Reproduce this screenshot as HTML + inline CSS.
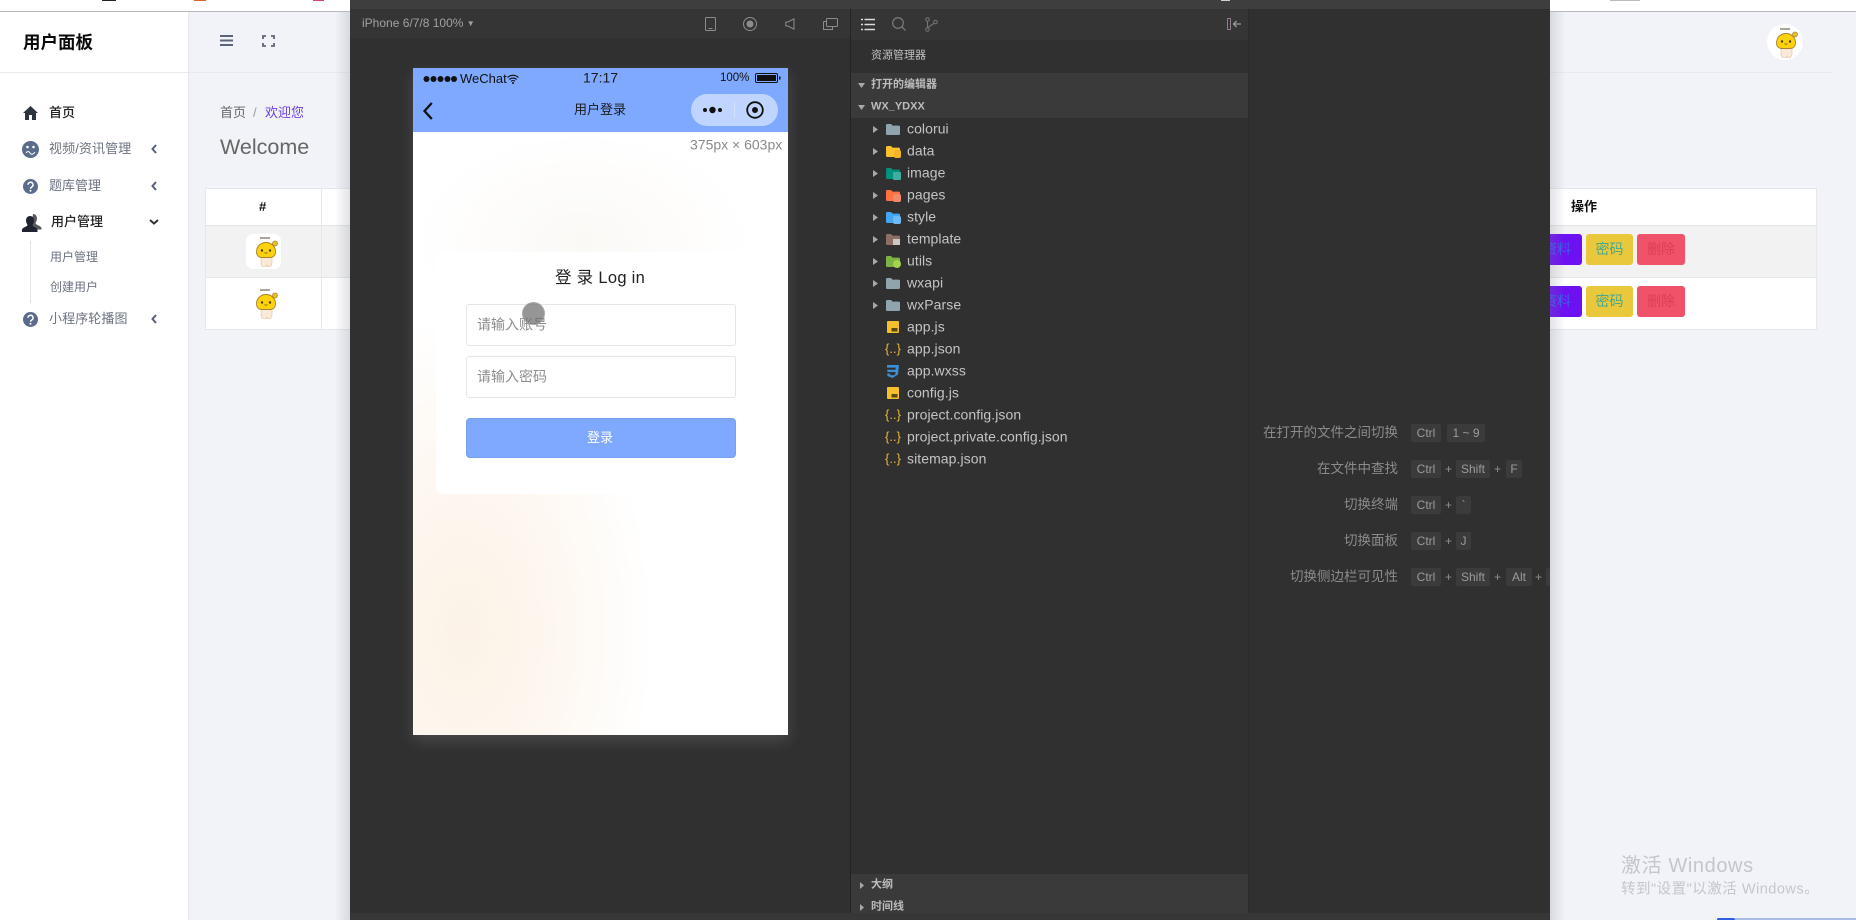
<!DOCTYPE html>
<html lang="zh"><head><meta charset="utf-8"><title>用户面板</title>
<style>
*{box-sizing:border-box;margin:0;padding:0}
html,body{width:1856px;height:920px;overflow:hidden;background:#f1f3f8;font-family:"Liberation Sans","Noto Sans CJK SC",sans-serif}
.a{position:absolute}
.t{position:absolute;white-space:nowrap;transform:translateY(-50%);line-height:1.2}
svg{position:absolute;overflow:visible;display:block}
.side{color:#6b7280;font-size:14px}
.tree{color:#c4c4c4;font-size:14px;left:907px;letter-spacing:.07px}
.lab{color:#8b8b8b;font-size:13.5px;right:458px}
.k{position:absolute;height:18px;line-height:18px;text-align:center;background:#3b3b3b;color:#9b9b9b;font-size:12px;border-radius:2px}
.p{position:absolute;color:#8e8e8e;font-size:12px;line-height:18px}
.btn{position:absolute;height:31px;border-radius:3px;font-size:14px;line-height:31px;text-align:center}
.j{position:absolute;white-space:nowrap;transform:translateY(-50%);left:885px;font-size:13px;line-height:1.2;color:#e8b53e}
</style></head><body>
<svg width="0" height="0" style="position:absolute">
<defs>
<symbol id="m" viewBox="0 0 22 30">
<rect x="4" y="0" width="10" height="2" fill="#8d8577" opacity=".75"/>
<path d="M5 19h11v7c0 2-2 4-3 4h-1l-1-2-1 2H8c-2 0-3-2-3-4z" fill="#fbe9d7" stroke="#d9bea2" stroke-width=".6"/>
<path d="M.5 15C.5 9 5 5.500 10 5.500s9.500 3.500 9.500 9.500c0 3-2 5.500-5 5.500H5.500c-3 0-5-2.500-5-5.500z" fill="#fdd20c" stroke="#a8822a" stroke-width=".9"/>
<circle cx="19" cy="6.500" r="2.500" fill="#e9bc2b" stroke="#a8822a" stroke-width=".7"/>
<circle cx="6" cy="13.500" r="1.200" fill="#4a3a20"/><circle cx="14" cy="13.500" r="1.200" fill="#4a3a20"/>
<path d="M8.500 15.500q1.500 1.500 3 0" fill="none" stroke="#6a4a20" stroke-width=".7"/>
</symbol>
<symbol id="fd" viewBox="0 0 14 11"><path d="M0 1.200C0 .5.5 0 1.200 0H5l1.500 1.600h6.300c.7 0 1.200.5 1.200 1.200v7c0 .7-.5 1.200-1.200 1.200H1.200C.5 11 0 10.500 0 9.800z" fill="currentColor"/></symbol>
<symbol id="js" viewBox="0 0 12 12"><rect width="12" height="12" rx="1" fill="#f5c02e"/><rect x="4.500" y="7" width="6" height="3.500" fill="#5a4a14"/></symbol>
</defs>
</svg>

<!-- browser top strip -->
<div class="a" style="left:0;top:0;width:1856px;height:11px;background:#fff"></div>
<div class="a" style="left:0;top:11px;width:1856px;height:1px;background:#b9b9bd"></div>
<div class="a" style="left:102px;top:0;width:14px;height:1px;background:#222"></div>
<div class="a" style="left:194px;top:0;width:12px;height:1px;background:#e0632f"></div>
<div class="a" style="left:313px;top:0;width:11px;height:1px;background:#d6476a"></div>
<div class="a" style="left:1610px;top:0;width:30px;height:1px;background:#bbb"></div>

<!-- left sidebar -->
<div class="a" style="left:0;top:12px;width:189px;height:908px;background:#fff;border-right:1px solid #e6e8ee"></div>
<div class="a" style="left:0;top:72px;width:1832px;height:1px;background:#e8eaef"></div>
<div class="t" style="left:23px;top:43px;font-size:17.500px;font-weight:700;color:#0a0a0a">用户面板</div>

<svg style="left:23px;top:106px" width="15" height="14" viewBox="0 0 15 14"><path d="M7.500 0 15 7h-2v7H9V9H6v5H2V7H0z" fill="#2c3440"/></svg>
<div class="t" style="left:49px;top:113px;font-size:13px;color:#222;font-weight:500">首页</div>

<svg style="left:22px;top:141px" width="17" height="17" viewBox="0 0 17 17"><circle cx="8.500" cy="8.500" r="8.500" fill="#5b6b8c"/><circle cx="5.500" cy="6" r="1.300" fill="#fff"/><circle cx="11.500" cy="6" r="1.300" fill="#fff"/><path d="M4 12q2-3 4 0t5-1" fill="none" stroke="#fff"/></svg>
<div class="t side" style="left:49px;top:149px;font-size:13px;letter-spacing:.1px">视频/资讯管理</div>

<svg style="left:23px;top:179px" width="15" height="15" viewBox="0 0 15 15"><circle cx="7.500" cy="7.500" r="7.500" fill="#5b6b8c"/><path d="M5 5.800a2.500 2.500 0 1 1 3.700 2.200c-.8.5-1.200.8-1.200 1.700" fill="none" stroke="#fff" stroke-width="1.500"/><circle cx="7.500" cy="11.800" r="1" fill="#fff"/></svg>
<div class="t side" style="left:49px;top:186px;font-size:13px">题库管理</div>

<svg style="left:22px;top:214px" width="20" height="18" viewBox="0 0 20 18"><path d="M11 0c2.500 0 4 2 4 4.500 0 2-1 3.500-1.500 4.500 0 1 1 1.500 3 2.500 1.500.7 3 1.500 3 3v1H9z" fill="#5a5a5a"/><path d="M8 2c2.700 0 4 2 4 4.500 0 2-.8 3.500-1.500 4.500 0 1 1 1.500 3 2.500 1 .5 2 1.500 2 2.500V18H0v-2c0-1.500 1.500-2.300 3-3 2-1 2.500-1.500 2.500-2C5 10 4 8.500 4 6.500 4 4 5.500 2 8 2z" fill="#1f2430"/></svg>
<div class="t" style="left:51px;top:222px;font-size:13px;color:#222;font-weight:500">用户管理</div>
<div class="a" style="left:30px;top:241px;width:1px;height:62px;background:#e2e4e9"></div>
<div class="t side" style="left:50px;top:257px;font-size:12px">用户管理</div>
<div class="t side" style="left:50px;top:287px;font-size:12px">创建用户</div>

<svg style="left:23px;top:312px" width="15" height="15" viewBox="0 0 15 15"><circle cx="7.500" cy="7.500" r="7.500" fill="#5b6b8c"/><path d="M5 5.800a2.500 2.500 0 1 1 3.700 2.200c-.8.5-1.200.8-1.200 1.700" fill="none" stroke="#fff" stroke-width="1.500"/><circle cx="7.500" cy="11.800" r="1" fill="#fff"/></svg>
<div class="t side" style="left:49px;top:319px;font-size:13px;letter-spacing:.1px">小程序轮播图</div>

<svg style="left:151px;top:144px" width="6" height="10" viewBox="0 0 6 10"><path d="M5 1 1.500 5 5 9" fill="none" stroke="#56627a" stroke-width="2"/></svg>
<svg style="left:151px;top:181px" width="6" height="10" viewBox="0 0 6 10"><path d="M5 1 1.500 5 5 9" fill="none" stroke="#56627a" stroke-width="2"/></svg>
<svg style="left:151px;top:314px" width="6" height="10" viewBox="0 0 6 10"><path d="M5 1 1.500 5 5 9" fill="none" stroke="#56627a" stroke-width="2"/></svg>
<svg style="left:149px;top:219px" width="10" height="6" viewBox="0 0 10 6"><path d="M1 1l4 3.500L9 1" fill="none" stroke="#333" stroke-width="2"/></svg>

<!-- main header -->
<svg style="left:220px;top:35px" width="13" height="11" viewBox="0 0 13 11"><path d="M0 1h13M0 5.500h13M0 10h13" stroke="#5b6478" stroke-width="2"/></svg>
<svg style="left:262px;top:35px" width="13" height="12" viewBox="0 0 13 12"><path d="M1 4V1h3M9 1h3v3M12 8v3H9M4 11H1V8" fill="none" stroke="#5b6478" stroke-width="1.800"/></svg>
<div class="a" style="left:1767px;top:24px;width:36px;height:36px;border-radius:50%;background:#fff"></div>
<svg style="left:1776px;top:28px" width="22" height="30"><use href="#m"/></svg>

<div class="t" style="left:220px;top:113px;font-size:13px;color:#666">首页</div>
<div class="t" style="left:253px;top:113px;font-size:13px;color:#999">/</div>
<div class="t" style="left:265px;top:113px;font-size:13px;color:#6a3ee6">欢迎您</div>
<div class="t" style="left:220px;top:148px;font-size:21.500px;color:#666">Welcome</div>

<!-- table -->
<div class="a" style="left:205px;top:188px;width:1612px;height:142px;background:#fff;border:1px solid #e5e7ec"></div>
<div class="a" style="left:206px;top:225px;width:1610px;height:53px;background:#f2f2f2;border-top:1px solid #e3e5e9;border-bottom:1px solid #e3e5e9"></div>
<div class="a" style="left:321px;top:189px;width:1px;height:140px;background:#e5e7ec"></div>
<div class="t" style="left:259px;top:207px;font-size:13px;font-weight:700;color:#111">#</div>
<div class="a" style="left:246px;top:234px;width:35px;height:35px;border-radius:7px;background:#fff"></div>
<svg style="left:256px;top:237px" width="22" height="30"><use href="#m"/></svg>
<svg style="left:256px;top:289px" width="22" height="30"><use href="#m"/></svg>
<div class="t" style="left:1571px;top:207px;font-size:13px;font-weight:700;color:#111">操作</div>

<div class="btn" style="left:1530px;top:234px;width:52px;background:#6d10f2;color:#3f5ce6;text-align:right;padding-right:11px">资料</div>
<div class="btn" style="left:1586px;top:234px;width:47px;background:#e9c83c;color:#4aa88a">密码</div>
<div class="btn" style="left:1637px;top:234px;width:48px;background:#ef5269;color:#d9405a">删除</div>
<div class="btn" style="left:1530px;top:286px;width:52px;background:#6d10f2;color:#3f5ce6;text-align:right;padding-right:11px">资料</div>
<div class="btn" style="left:1586px;top:286px;width:47px;background:#e9c83c;color:#4aa88a">密码</div>
<div class="btn" style="left:1637px;top:286px;width:48px;background:#ef5269;color:#d9405a">删除</div>

<!-- dark devtools window -->
<div class="a" style="left:335px;top:12px;width:15px;height:908px;background:linear-gradient(90deg,rgba(120,125,140,0),rgba(120,125,140,.22))"></div>
<div class="a" style="left:1550px;top:12px;width:15px;height:908px;background:linear-gradient(270deg,rgba(120,125,140,0),rgba(120,125,140,.22))"></div>
<div class="a" style="left:350px;top:0;width:1200px;height:920px;background:#303030"></div>
<div class="a" style="left:350px;top:0;width:1200px;height:9px;background:#3e3e3e"></div>
<div class="a" style="left:1221px;top:0;width:9px;height:1px;background:#cfcfcf"></div>
<div class="a" style="left:350px;top:9px;width:500px;height:29px;background:#353535"></div>
<div class="a" style="left:851px;top:9px;width:397px;height:31px;background:#353535"></div>
<div class="a" style="left:850px;top:9px;width:1px;height:911px;background:#242424"></div>
<div class="a" style="left:1248px;top:9px;width:1px;height:911px;background:#2c2c2c"></div>
<div class="a" style="left:350px;top:913px;width:1200px;height:7px;background:#373737"></div>

<div class="t" style="left:362px;top:23px;font-size:12px;color:#a2a2a2">iPhone 6/7/8 100% <span style="font-size:8px;vertical-align:1px">▼</span></div>
<svg style="left:705px;top:17px" width="11" height="14" viewBox="0 0 11 14"><rect x=".5" y=".5" width="10" height="13" rx="1" fill="none" stroke="#8c8c8c"/><path d="M3.500 11.500h4" stroke="#8c8c8c"/></svg>
<svg style="left:743px;top:17px" width="14" height="14" viewBox="0 0 14 14"><circle cx="7" cy="7" r="6.500" fill="none" stroke="#8c8c8c"/><circle cx="7" cy="7" r="3.500" fill="#8c8c8c"/></svg>
<svg style="left:785px;top:18px" width="10" height="12" viewBox="0 0 10 12"><path d="M9 .8v10.400L3 8H.8V4H3z" fill="none" stroke="#8c8c8c"/></svg>
<svg style="left:823px;top:18px" width="15" height="12" viewBox="0 0 15 12"><rect x="3.500" y=".5" width="11" height="8" rx="1" fill="none" stroke="#8c8c8c"/><path d="M3.500 3.500H1a.5.500 0 0 0-.5.500v7.500h9V8.500" fill="none" stroke="#8c8c8c"/></svg>

<svg style="left:861px;top:18px" width="14" height="13" viewBox="0 0 14 13"><path d="M3.500 1.500H14M3.500 6.500H14M3.500 11.500H14M0 1.500h2M0 6.500h2M0 11.500h2" stroke="#dcdcdc" stroke-width="1.400"/></svg>
<svg style="left:892px;top:17px" width="14" height="14" viewBox="0 0 14 14"><circle cx="6" cy="6" r="5.300" fill="none" stroke="#777" stroke-width="1.300"/><path d="M10 10l3.500 3.500" stroke="#777" stroke-width="1.300"/></svg>
<svg style="left:925px;top:17px" width="13" height="15" viewBox="0 0 13 15"><circle cx="2.500" cy="2.500" r="1.800" fill="none" stroke="#777"/><circle cx="2.500" cy="12.500" r="1.800" fill="none" stroke="#777"/><circle cx="10.500" cy="5" r="1.800" fill="none" stroke="#777"/><path d="M2.500 4.500v6M9 6.500Q6 8 3 10.500" fill="none" stroke="#777"/></svg>
<svg style="left:1227px;top:18px" width="14" height="12" viewBox="0 0 14 12"><rect x=".5" y=".5" width="3" height="11" fill="none" stroke="#8a7a8a"/><path d="M14 6H7M9.500 3 6.500 6l3 3" fill="none" stroke="#999" stroke-width="1.300"/></svg>

<div class="t" style="left:871px;top:56px;font-size:11px;color:#c2c2c2">资源管理器</div>
<div class="a" style="left:851px;top:73px;width:397px;height:45px;background:#3a3a3a"></div>
<div class="t" style="left:871px;top:85px;font-size:11px;font-weight:700;color:#bcbcbc">打开的编辑器</div>
<div class="t" style="left:871px;top:107px;font-size:11px;font-weight:700;color:#bcbcbc">WX_YDXX</div>
<svg style="left:858px;top:83px" width="7" height="5"><path d="M0 0h7L3.500 5z" fill="#a8a8a8"/></svg>
<svg style="left:858px;top:105px" width="7" height="5"><path d="M0 0h7L3.500 5z" fill="#a8a8a8"/></svg>

<!-- tree -->
<svg style="left:873px;top:126px" width="5" height="7"><path d="M0 0l5 3.500L0 7z" fill="#a8a8a8"/></svg>
<svg style="left:873px;top:148px" width="5" height="7"><path d="M0 0l5 3.500L0 7z" fill="#a8a8a8"/></svg>
<svg style="left:873px;top:170px" width="5" height="7"><path d="M0 0l5 3.500L0 7z" fill="#a8a8a8"/></svg>
<svg style="left:873px;top:192px" width="5" height="7"><path d="M0 0l5 3.500L0 7z" fill="#a8a8a8"/></svg>
<svg style="left:873px;top:214px" width="5" height="7"><path d="M0 0l5 3.500L0 7z" fill="#a8a8a8"/></svg>
<svg style="left:873px;top:236px" width="5" height="7"><path d="M0 0l5 3.500L0 7z" fill="#a8a8a8"/></svg>
<svg style="left:873px;top:258px" width="5" height="7"><path d="M0 0l5 3.500L0 7z" fill="#a8a8a8"/></svg>
<svg style="left:873px;top:280px" width="5" height="7"><path d="M0 0l5 3.500L0 7z" fill="#a8a8a8"/></svg>
<svg style="left:873px;top:302px" width="5" height="7"><path d="M0 0l5 3.500L0 7z" fill="#a8a8a8"/></svg>

<svg style="left:886px;top:124px;color:#90a4ae" width="14" height="11"><use href="#fd"/></svg>
<svg style="left:886px;top:146px;color:#fbc02d" width="14" height="11"><use href="#fd"/><rect x="8" y="4" width="7" height="8" rx="2" fill="#f2b52a"/></svg>
<svg style="left:886px;top:168px;color:#00917c" width="14" height="11"><use href="#fd"/><rect x="7" y="4" width="8" height="8" rx="1" fill="#3fae9e"/></svg>
<svg style="left:886px;top:190px;color:#ff7043" width="14" height="11"><use href="#fd"/><rect x="7" y="4" width="8" height="8" rx="2" fill="#f08a6c"/></svg>
<svg style="left:886px;top:212px;color:#42a5f5" width="14" height="11"><use href="#fd"/><rect x="7" y="4" width="8" height="8" rx="2" fill="#6fbaf5"/></svg>
<svg style="left:886px;top:234px;color:#8d6e63" width="14" height="11"><use href="#fd"/><rect x="7" y="5" width="7" height="6" fill="#cfc7c3"/></svg>
<svg style="left:886px;top:256px;color:#7cb342" width="14" height="11"><use href="#fd"/><circle cx="11" cy="8" r="4" fill="#a5d24f"/></svg>
<svg style="left:886px;top:278px;color:#90a4ae" width="14" height="11"><use href="#fd"/></svg>
<svg style="left:886px;top:300px;color:#90a4ae" width="14" height="11"><use href="#fd"/></svg>

<div class="t tree" style="top:129px">colorui</div>
<div class="t tree" style="top:151px">data</div>
<div class="t tree" style="top:173px">image</div>
<div class="t tree" style="top:195px">pages</div>
<div class="t tree" style="top:217px">style</div>
<div class="t tree" style="top:239px">template</div>
<div class="t tree" style="top:261px">utils</div>
<div class="t tree" style="top:283px">wxapi</div>
<div class="t tree" style="top:305px">wxParse</div>
<div class="t tree" style="top:327px">app.js</div>
<div class="t tree" style="top:349px">app.json</div>
<div class="t tree" style="top:371px">app.wxss</div>
<div class="t tree" style="top:393px">config.js</div>
<div class="t tree" style="top:415px">project.config.json</div>
<div class="t tree" style="top:437px">project.private.config.json</div>
<div class="t tree" style="top:459px">sitemap.json</div>

<svg style="left:887px;top:321px" width="12" height="12"><use href="#js"/></svg>
<svg style="left:887px;top:387px" width="12" height="12"><use href="#js"/></svg>
<div class="j" style="top:349px">{..}</div>
<div class="j" style="top:415px">{..}</div>
<div class="j" style="top:437px">{..}</div>
<div class="j" style="top:459px">{..}</div>
<svg style="left:886px;top:365px" width="13" height="13" viewBox="0 0 13 13"><path d="M1 0h12l-1 9.500L6.500 13 1.500 11 1.200 8.500h2.500l.2 1 2.600 1 2.800-1 .2-2.500H1.500L1.200 4.800h8.300l.2-2.200H1z" fill="#3b8fd8"/></svg>

<div class="a" style="left:851px;top:874px;width:397px;height:39px;background:#3a3a3a"></div>
<div class="t" style="left:871px;top:885px;font-size:11px;font-weight:700;color:#bcbcbc">大纲</div>
<div class="t" style="left:871px;top:907px;font-size:11px;font-weight:700;color:#bcbcbc">时间线</div>
<svg style="left:860px;top:882px" width="4" height="7"><path d="M0 0l4 3.500L0 7z" fill="#a8a8a8"/></svg>
<svg style="left:860px;top:904px" width="4" height="7"><path d="M0 0l4 3.500L0 7z" fill="#a8a8a8"/></svg>

<!-- shortcuts -->
<div class="t lab" style="top:433px">在打开的文件之间切换</div>
<div class="t lab" style="top:469px">在文件中查找</div>
<div class="t lab" style="top:505px">切换终端</div>
<div class="t lab" style="top:541px">切换面板</div>
<div class="t lab" style="top:577px">切换侧边栏可见性</div>
<div class="k" style="left:1411px;top:424px;width:30px">Ctrl</div><div class="k" style="left:1447px;top:424px;width:38px">1 ~ 9</div>
<div class="k" style="left:1411px;top:460px;width:30px">Ctrl</div><div class="p" style="left:1445px;top:460px">+</div><div class="k" style="left:1456px;top:460px;width:34px">Shift</div><div class="p" style="left:1494px;top:460px">+</div><div class="k" style="left:1506px;top:460px;width:16px">F</div>
<div class="k" style="left:1411px;top:496px;width:30px">Ctrl</div><div class="p" style="left:1445px;top:496px">+</div><div class="k" style="left:1456px;top:496px;width:15px">`</div>
<div class="k" style="left:1411px;top:532px;width:30px">Ctrl</div><div class="p" style="left:1445px;top:532px">+</div><div class="k" style="left:1456px;top:532px;width:15px">J</div>
<div class="k" style="left:1411px;top:568px;width:30px">Ctrl</div><div class="p" style="left:1445px;top:568px">+</div><div class="k" style="left:1456px;top:568px;width:34px">Shift</div><div class="p" style="left:1494px;top:568px">+</div><div class="k" style="left:1506px;top:568px;width:26px">Alt</div><div class="p" style="left:1535px;top:568px">+</div><div class="k" style="left:1546px;top:568px;width:4px"></div>

<!-- phone -->
<div class="a" style="left:413px;top:68px;width:375px;height:667px;background:#fff;box-shadow:0 6px 14px rgba(255,255,255,.13);overflow:hidden">
  <div class="a" style="left:0;top:64px;width:375px;height:603px;background:
   radial-gradient(ellipse 190px 320px at 50px 500px,rgba(252,241,228,.9),rgba(252,241,228,.5) 55%,rgba(252,241,228,0) 100%),
   radial-gradient(ellipse 170px 110px at 170px 110px,rgba(248,245,240,.6),rgba(250,247,243,0) 100%),#fff"></div>
  <div class="a" style="left:0;top:0;width:375px;height:64px;background:#7fa8ff"></div>
</div>
<div class="a" style="left:436px;top:252px;width:352px;height:242px;background:#fff;border-radius:6px 0 0 6px"></div>

<svg style="left:423px;top:75px" width="34" height="8" viewBox="0 0 34 8"><circle cx="3.500" cy="4" r="3" fill="#111"/><circle cx="10.500" cy="4" r="3" fill="#111"/><circle cx="17.500" cy="4" r="3" fill="#111"/><circle cx="24.500" cy="4" r="3" fill="#111"/><circle cx="31" cy="4" r="3" fill="#111"/></svg>
<div class="t" style="left:460px;top:79px;font-size:13px;color:#111">WeChat</div>
<svg style="left:507px;top:74px" width="12" height="10" viewBox="0 0 12 10"><path d="M.5 3.500a8 8 0 0 1 11 0M2.300 5.500a5.500 5.500 0 0 1 7.400 0M4 7.300a3 3 0 0 1 4 0" fill="none" stroke="#111" stroke-width="1.100"/><circle cx="6" cy="9" r="1" fill="#111"/></svg>
<div class="t" style="left:583px;top:78px;font-size:14px;color:#1a1a1a">17:17</div>
<div class="t" style="left:720px;top:79px;font-size:11.500px;color:#111">100%</div>
<svg style="left:755px;top:73px" width="26" height="10" viewBox="0 0 26 10"><rect x=".5" y=".5" width="22" height="9" rx="1.500" fill="none" stroke="#111"/><rect x="2" y="2" width="19" height="6" fill="#111"/><rect x="24" y="3.500" width="1.500" height="3" fill="#111"/></svg>
<svg style="left:423px;top:102px" width="10" height="18" viewBox="0 0 10 18"><path d="M8.800 1 1.500 9l7.300 8" fill="none" stroke="#111" stroke-width="2.300"/></svg>
<div class="t" style="left:574px;top:110px;font-size:13px;color:#1a1a1a">用户登录</div>
<div class="a" style="left:691px;top:94px;width:87px;height:32px;border-radius:16px;background:rgba(255,255,255,.5)"></div>
<div class="a" style="left:734px;top:102px;width:1px;height:16px;background:rgba(255,255,255,.3)"></div>
<svg style="left:702px;top:106px" width="22" height="8" viewBox="0 0 22 8"><circle cx="3" cy="4" r="2" fill="#111"/><circle cx="10.500" cy="4" r="3.200" fill="#111"/><circle cx="18" cy="4" r="2" fill="#111"/></svg>
<svg style="left:746px;top:101px" width="18" height="18" viewBox="0 0 18 18"><circle cx="9" cy="9" r="7.800" fill="none" stroke="#111" stroke-width="1.800"/><circle cx="9" cy="9" r="3" fill="#111"/></svg>
<div class="t" style="left:690px;top:145px;font-size:14px;color:#8a8a8a">375px × 603px</div>

<div class="t" style="left:555px;top:278.500px;font-size:16.500px;color:#222;letter-spacing:.3px">登 录 Log in</div>
<div class="a" style="left:466px;top:304px;width:270px;height:42px;border:1px solid #e6e6e6;border-radius:3px;background:#fff"></div>
<div class="a" style="left:466px;top:356px;width:270px;height:42px;border:1px solid #e6e6e6;border-radius:3px;background:#fff"></div>
<div class="t" style="left:477px;top:325px;font-size:14px;color:#8c8c8c">请输入账号</div>
<div class="t" style="left:477px;top:377px;font-size:14px;color:#8c8c8c">请输入密码</div>
<div class="a" style="left:522px;top:302px;width:23px;height:23px;border-radius:50%;background:rgba(110,110,110,.72);border:1px solid rgba(180,180,180,.6)"></div>
<div class="a" style="left:466px;top:418px;width:270px;height:40px;border-radius:4px;background:#7fa8ff;border:1px solid #769fef"></div>
<div class="t" style="left:587px;top:438px;font-size:13px;color:#fff">登录</div>

<!-- windows watermark -->
<div class="t" style="left:1621px;top:866px;font-size:20px;letter-spacing:.6px;color:#c3c6cc">激活 Windows</div>
<div class="t" style="left:1621px;top:890px;font-size:14.500px;letter-spacing:.5px;color:#c3c6cc">转到"设置"以激活 Windows。</div>
<div class="a" style="left:1717px;top:918px;width:139px;height:2px;background:#a9bde6"></div>
<div class="a" style="left:1717px;top:918px;width:18px;height:2px;background:#2f5fe0;border-radius:9px 9px 0 0"></div>
</body></html>
